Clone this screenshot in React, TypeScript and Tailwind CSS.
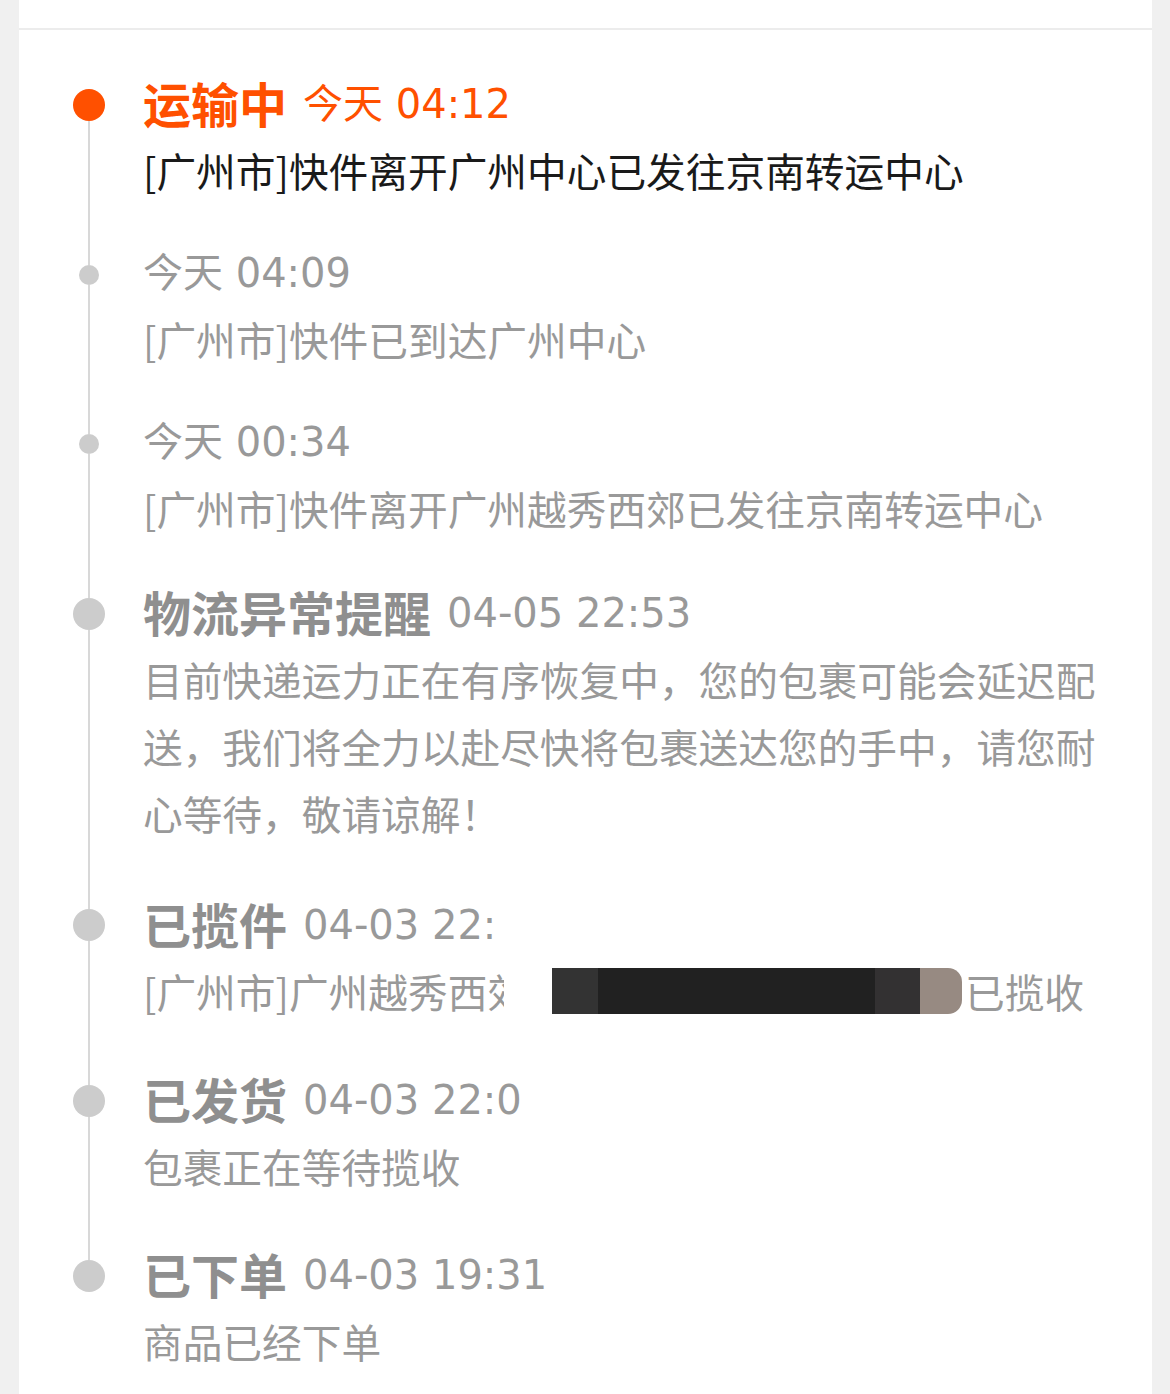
import React from "react";

type Item = {
  title?: string;
  time: string;
  timeClip?: string;
  desc: React.ReactNode;
  active?: boolean;
  pad: string;
  top: string;
};

const items: Item[] = [
  {
    title: "运输中",
    time: "今天 04:12",
    desc: "[广州市]快件离开广州中心已发往京南转运中心",
    active: true,
    pad: "",
    top: "h-[21px]",
  },
  { time: "今天 04:09", desc: "[广州市]快件已到达广州中心", pad: "", top: "h-[28px]" },
  { time: "今天 00:34", desc: "[广州市]快件离开广州越秀西郊已发往京南转运中心", pad: "", top: "h-[28px]" },
  {
    title: "物流异常提醒",
    time: "04-05 22:53",
    desc: "目前快递运力正在有序恢复中，您的包裹可能会延迟配送，我们将全力以赴尽快将包裹送达您的手中，请您耐心等待，敬请谅解！",
    pad: "pt-[2px]",
    top: "h-[23px]",
  },
  {
    title: "已揽件",
    time: "04-03 22:17",
    timeClip: "w-[190px]",
    desc: (
      <span className="flex items-center">
        <span className="inline-block w-[361px] overflow-hidden whitespace-nowrap">[广州市]广州越秀西郊</span>
        <span className="ml-[48px] flex h-[46px]">
          <span className="w-[46px] bg-[#333333]" />
          <span className="w-[277px] bg-[#212121]" />
          <span className="w-[45px] bg-[#333132]" />
          <span className="w-[42px] rounded-r-[14px] bg-[#978a82]" />
        </span>
        <span className="ml-[3px]">已揽收</span>
      </span>
    ),
    pad: "pt-[9px]",
    top: "h-[29px]",
  },
  {
    title: "已发货",
    time: "04-03 22:05",
    timeClip: "w-[218px]",
    desc: "包裹正在等待揽收",
    pad: "pt-[6px]",
    top: "h-[27px]",
  },
  { title: "已下单", time: "04-03 19:31", desc: "商品已经下单", pad: "pt-[6px]", top: "h-[27px]" },
];

export default function App() {
  return (
    <div className="min-h-[1394px] bg-[#f0f0f0] font-['Noto_Sans_CJK_SC','Noto_Sans',sans-serif]">
      <div className="ml-[19px] mr-[18px] min-h-[1394px] bg-white">
        <div className="h-[30px] border-b-2 border-[#ececec]" />
        <div className="pt-[38px] pl-[54px] pr-[40px]">
          {items.map((item, i) => {
            const first = i === 0;
            const last = i === items.length - 1;
            return (
              <div key={i} className="flex">
                <div className="flex w-8 flex-col items-center">
                  <div className={(first ? "bg-transparent" : "bg-[#d8d8d8]") + " w-[2px] " + item.top} />
                  <div
                    className={
                      "shrink-0 rounded-full " +
                      (item.active ? "h-8 w-8 bg-[#ff5000]" : item.title ? "h-8 w-8 bg-[#cccccc]" : "h-5 w-5 bg-[#cccccc]")
                    }
                  />
                  {!last && <div className="w-[2px] flex-1 bg-[#d8d8d8]" />}
                </div>
                <div className={"ml-[38px] flex-1 pb-[34px] " + item.pad}>
                  <div className="flex h-[68px] items-center whitespace-nowrap">
                    {item.title && (
                      <span
                        className={
                          "mr-[16px] text-[48px] font-bold " + (item.active ? "text-[#ff5000]" : "text-[#8f8f8f]")
                        }
                      >
                        {item.title}
                      </span>
                    )}
                    <span
                      className={
                        "inline-block overflow-hidden pt-[3px] font-['DejaVu_Sans','Noto_Sans_CJK_SC',sans-serif] text-[40px] " +
                        (item.active ? "text-[#ff5000] " : "text-[#999999] ") +
                        (item.timeClip || "")
                      }
                    >
                      {item.time}
                    </span>
                  </div>
                  <div className={"text-[39.7px] leading-[67px] " + (item.active ? "text-[#1a1a1a]" : "text-[#999999]")}>
                    {item.desc}
                  </div>
                </div>
              </div>
            );
          })}
        </div>
      </div>
    </div>
  );
}
